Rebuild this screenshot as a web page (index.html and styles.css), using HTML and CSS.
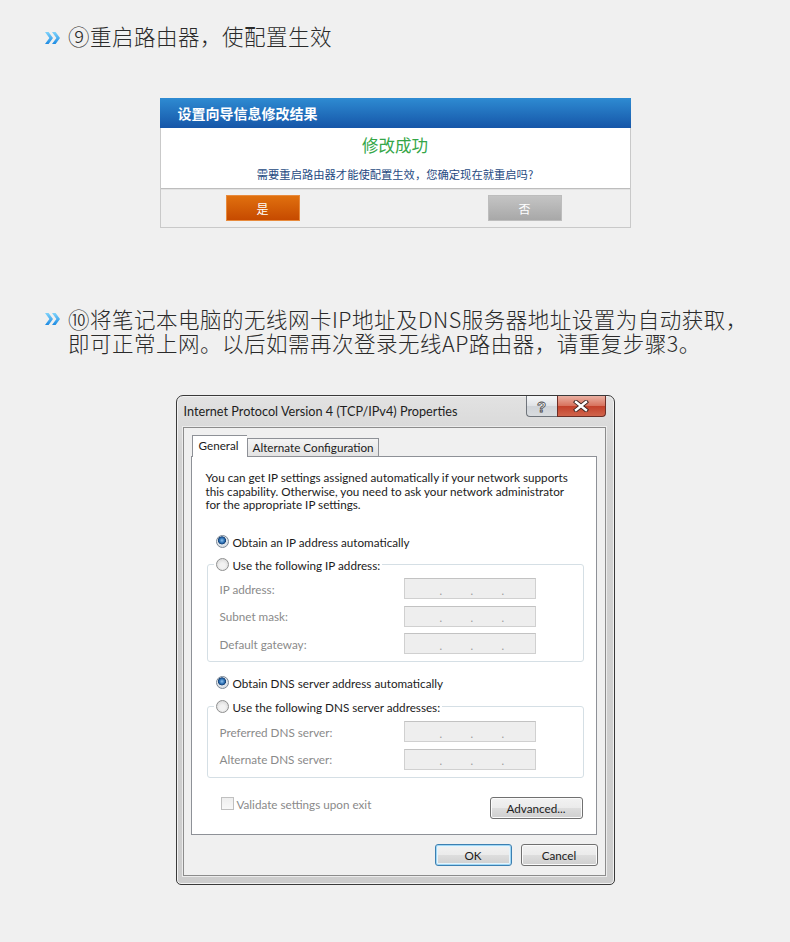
FILE: index.html
```html
<!DOCTYPE html>
<html lang="zh-CN">
<head>
<meta charset="utf-8">
<title>重启路由器</title>
<link rel="stylesheet" href="styles.css">
</head>
<body>
<main class="page">
  <h2 class="step">
    <svg class="chev" viewBox="0 0 15 12"><defs><linearGradient id="cg1" x1="0" y1="0" x2="0" y2="1"><stop offset="0" stop-color="#7fd3fb"/><stop offset="1" stop-color="#1d8be3"/></linearGradient></defs><polygon fill="url(#cg1)" points="0,0 3.6,0 8,6 3.6,12 0,12 4.4,6"/><polygon fill="url(#cg1)" points="7,0 10.6,0 15,6 10.6,12 7,12 11.4,6"/></svg>
    <span>⑨重启路由器，使配置生效</span>
  </h2>

  <section class="rdlg">
    <div class="rdlg-head">设置向导信息修改结果</div>
    <div class="rdlg-body">
      <div class="rdlg-ok">修改成功</div>
      <div class="rdlg-msg">需要重启路由器才能使配置生效，您确定现在就重启吗?</div>
    </div>
    <div class="rdlg-foot">
      <button class="rbtn rbtn-yes">是</button>
      <button class="rbtn rbtn-no">否</button>
    </div>
  </section>

  <h2 class="step step-10">
    <svg class="chev" viewBox="0 0 15 12"><defs><linearGradient id="cg2" x1="0" y1="0" x2="0" y2="1"><stop offset="0" stop-color="#7fd3fb"/><stop offset="1" stop-color="#1d8be3"/></linearGradient></defs><polygon fill="url(#cg2)" points="0,0 3.6,0 8,6 3.6,12 0,12 4.4,6"/><polygon fill="url(#cg2)" points="7,0 10.6,0 15,6 10.6,12 7,12 11.4,6"/></svg>
    <span class="lines"><span class="ln">⑩将笔记本电脑的无线网卡IP地址及DNS服务器地址设置为自动获取，</span><span class="ln">即可正常上网。以后如需再次登录无线AP路由器，请重复步骤3。</span></span>
  </h2>

  <section class="win">
    <div class="win-title">
      <span class="win-caption">Internet Protocol Version 4 (TCP/IPv4) Properties</span>
      <div class="win-ctrls">
        <span class="wc wc-help">?</span>
        <span class="wc wc-close"><svg viewBox="0 0 16 12" width="16" height="12"><path d="M3 2 L13 10 M13 2 L3 10" stroke="#3b2320" stroke-width="4.2" stroke-linecap="square"/><path d="M3 2 L13 10 M13 2 L3 10" stroke="#ffffff" stroke-width="2.4" stroke-linecap="square"/></svg></span>
      </div>
    </div>
    <div class="win-client">
      <div class="tabs">
        <span class="tab tab-on">General</span>
        <span class="tab">Alternate Configuration</span>
      </div>
      <div class="tabpanel">
        <p class="intro">You can get IP settings assigned automatically if your network supports<br>this capability. Otherwise, you need to ask your network administrator<br>for the appropriate IP settings.</p>

        <div class="opt"><span class="radio on"></span>Obtain an IP address automatically</div>
        <fieldset class="grp">
          <legend><span class="radio"></span>Use the following IP address:</legend>
          <div class="field"><span class="flabel">IP address:</span><span class="ipbox"><i>.</i><i>.</i><i>.</i></span></div>
          <div class="field"><span class="flabel">Subnet mask:</span><span class="ipbox"><i>.</i><i>.</i><i>.</i></span></div>
          <div class="field"><span class="flabel">Default gateway:</span><span class="ipbox"><i>.</i><i>.</i><i>.</i></span></div>
        </fieldset>

        <div class="opt opt-dns"><span class="radio on"></span>Obtain DNS server address automatically</div>
        <fieldset class="grp grp-dns">
          <legend><span class="radio"></span>Use the following DNS server addresses:</legend>
          <div class="field"><span class="flabel">Preferred DNS server:</span><span class="ipbox"><i>.</i><i>.</i><i>.</i></span></div>
          <div class="field"><span class="flabel">Alternate DNS server:</span><span class="ipbox"><i>.</i><i>.</i><i>.</i></span></div>
        </fieldset>

        <div class="bottomrow">
          <span class="chk"><span class="cbox"></span>Validate settings upon exit</span>
          <button class="wbtn wbtn-adv">Advanced...</button>
        </div>
      </div>
      <div class="dlg-btns">
        <button class="wbtn wbtn-ok">OK</button>
        <button class="wbtn">Cancel</button>
      </div>
    </div>
  </section>
</main>
</body>
</html>
```

FILE: styles.css
```css
* { box-sizing: border-box; }
html, body { margin: 0; padding: 0; }
body {
  width: 790px;
  background: #f0f0f0;
  font-family: "Noto Sans CJK SC", "Noto Sans", sans-serif;
  color: #2a2a2a;
}
.page { padding: 24px 0 58px; }

/* step headings */
.step {
  display: flex;
  align-items: flex-start;
  margin: 0;
  padding-left: 45px;
  font-weight: 300;
  font-size: 21.5px;
  letter-spacing: 0.5px;
  line-height: 24px;
  color: #2a2a2a;
}
.chev { flex: none; width: 15px; height: 12px; margin: 8px 8px 0 0; }
.step-10 { margin-top: 79px; }
.step-10 .chev { margin-top: 6px; }
.lines { display: flex; flex-direction: column; }
.ln { display: block; height: 24px; }

/* router dialog */
.rdlg {
  width: 471px;
  margin: 50px auto 0;
  border: 1px solid #c9c9c9;
  background: #fff;
}
.rdlg-head {
  height: 30px;
  line-height: 30px;
  padding-left: 18px;
  margin: -1px -1px 0;
  color: #fff;
  font-weight: bold;
  font-size: 14px;
  background: linear-gradient(#2e8bd2, #1656a8);
}
.rdlg-body {
  text-align: center;
  padding: 6px 0 6px;
  border-bottom: 1px solid #bdbdbd;
}
.rdlg-ok { font-size: 16.5px; line-height: 22px; color: #34a647; }
.rdlg-msg { margin-top: 10px; font-size: 11.3px; line-height: 16px; color: #264a82; }
.rdlg-foot {
  display: flex;
  justify-content: space-between;
  padding: 5px 68px 6px 65px;
  background: #f0f0f0;
  border-top: 1px solid #e2e2e2;
}
.rbtn {
  width: 74px;
  height: 26px;
  padding: 0;
  font-family: "Noto Sans CJK SC", sans-serif;
  font-size: 12px;
  color: #fff;
  cursor: pointer;
}
.rbtn-yes { background: linear-gradient(#e0700e, #c64a00); border: 1px solid #e88a3c; }
.rbtn-no { background: linear-gradient(#c4c4c4, #a8a8a8); border: 1px solid #bdbdbd; }

/* windows dialog */
.win {
  width: 439px;
  margin: 40px auto 0;
  border: 1px solid #3a3a3a;
  border-radius: 7px 7px 5px 5px;
  padding: 0 8px 8px 6px;
  background: linear-gradient(#e2e2e2, #d2d2d2 60px, #cdcdcd);
  box-shadow: inset 0 0 0 1px #f2f2f2;
  font-family: "Lato", "Open Sans", sans-serif;
  font-size: 11.7px;
  color: #1b1b1b;
}
.win-title { display: flex; height: 31px; }
.win-caption { margin: 7px 0 0 1px; line-height: 16px; font-size: 12.7px; color: #1e1e1e; }
.win-ctrls { display: flex; margin-left: auto; height: 21px; }
.wc {
  display: flex;
  align-items: center;
  justify-content: center;
  height: 21px;
  border: 1px solid #6f747b;
  border-top: none;
}
.wc-help {
  width: 31px;
  border-right: none;
  border-radius: 0 0 0 4px;
  background: linear-gradient(#f6f7f8, #dfe2e6 50%, #cfd3d8 51%, #d9dcdf);
  font-family: "Liberation Sans", sans-serif;
  font-weight: bold;
  font-size: 15px;
  color: #f2f2f2;
  -webkit-text-stroke: 0.8px #4a4a4a;
}
.wc-close {
  width: 49px;
  border-color: #6c2e26;
  border-radius: 0 0 4px 0;
  background: linear-gradient(#eab0a2, #d8735e 48%, #c3412b 52%, #d0644b);
}
.win-client {
  border: 1px solid #8c8c8c;
  background: #f0f0f0;
  padding: 7px 8px 9px 7px;
  box-shadow: 0 0 0 1px #ececec;
}
.tabs { display: flex; align-items: flex-end; margin-left: 1px; }
.tab {
  height: 18px;
  line-height: 17px;
  padding: 0 4px 0 5px;
  border: 1px solid #8e9197;
  border-bottom: none;
  background: linear-gradient(#f4f4f4, #e3e3e3);
}
.tab-on {
  position: relative;
  z-index: 1;
  height: 22px;
  line-height: 19px;
  margin-bottom: -1px;
  padding: 0 8px 0 6px;
  background: #fff;
  border-right: none;
}
.tabpanel {
  border: 1px solid #8e9197;
  background: #fff;
  padding: 14px 12px 15px 15px;
}
.intro { margin: 0 0 0 -1px; line-height: 13.5px; }
.opt { display: flex; align-items: center; height: 16px; margin: 22px 0 0 9px; }
.opt-dns { margin-top: 12.5px; }
.radio {
  flex: none;
  width: 13px;
  height: 13px;
  margin-right: 4px;
  border: 1px solid #8e8f8f;
  border-radius: 50%;
  background: radial-gradient(circle at 50% 60%, #f2f2f2 30%, #d0d0d0 100%);
}
.radio.on {
  border-color: #7b8794;
  background: radial-gradient(circle at 45% 40%, #8fc3ef 0, #2b6fb3 28%, #143f73 42%, #e4e9ee 48%, #c9ced4 100%);
}
.grp {
  margin: 7px 0 0;
  padding: 5.5px 0 7px 0;
  border: 1px solid #d5dfe5;
  border-radius: 3px;
}
.grp-dns { margin-top: 8px; padding-top: 6.5px; }
.grp legend {
  display: flex;
  align-items: center;
  height: 16px;
  margin-left: 6px;
  padding: 0 2px;
}
.field { display: flex; align-items: center; height: 21px; margin-left: 12px; color: #8a8a8a; }
.field + .field { margin-top: 6.5px; }
.flabel { width: 184px; flex: none; }
.ipbox {
  display: flex;
  align-items: center;
  gap: 27px;
  width: 132px;
  height: 21px;
  padding: 0 0 0 35px;
  border: 1px solid #d0d0d0;
  border-top-color: #c2c2c2;
  background: #eeeeee;
}
.ipbox i { font-style: normal; color: #9a9a9a; font-size: 11px; line-height: 11px; padding-top: 3px; width: 4px; }
.bottomrow { display: flex; justify-content: space-between; align-items: flex-start; margin-top: 19px; }
.chk { display: flex; align-items: center; height: 14px; margin: 0 0 0 14px; color: #8a8a8a; }
.cbox {
  width: 13px;
  height: 13px;
  margin-right: 3px;
  border: 1px solid #c0c0c0;
  background: linear-gradient(#eeeeee, #f8f8f8);
}
.wbtn {
  width: 77px;
  height: 22px;
  padding: 0;
  border: 1px solid #707070;
  border-radius: 3px;
  background: linear-gradient(#f2f2f2, #ebebeb 49%, #dddddd 51%, #cfcfcf);
  box-shadow: inset 0 0 0 1px #fbfbfb;
  font-family: "Lato", "Open Sans", sans-serif;
  font-size: 11.7px;
  color: #1b1b1b;
}
.wbtn-adv { width: 93px; margin-right: 1px; }
.wbtn-ok {
  border-color: #3c7fb1;
  box-shadow: inset 0 0 0 1px #9fd7f5, inset 0 0 0 2px #e6f4fc;
}
.dlg-btns { display: flex; justify-content: flex-end; gap: 9px; margin: 9px -1px 0 0; }
```
